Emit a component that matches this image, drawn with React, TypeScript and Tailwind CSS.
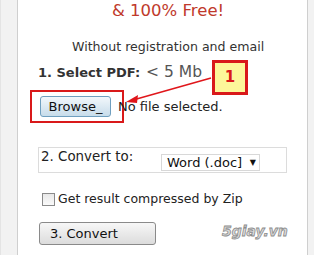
import React from "react";

const font = { fontFamily: '"DejaVu Sans", Verdana, sans-serif' };

export default function App() {
  return (
    <div className="flex h-[255px] w-[314px] overflow-hidden bg-white" style={font}>
      <div className="w-[18px] shrink-0 border-l border-r border-l-[#e4e4e4] border-r-[#cfcfcf] bg-[#f2f2f2]" />
      <div className="relative flex-1">
        <p className="h-[22px] pl-[94px] text-[16.5px] leading-[22px] text-[#c0392b]">&amp; 100% Free!</p>
        <p className="mt-[17px] h-[16px] pl-[54px] text-[12.6px] leading-[16px] text-[#333]">
          Without registration and email
        </p>
        <div className="mt-[8px] flex h-[18px] items-baseline pl-[20px] leading-[18px]">
          <span className="text-[13px] font-bold text-[#333]">1. Select PDF:</span>
          <span className="ml-[6px] text-[15.5px] text-[#555]">&lt; 5 Mb</span>
        </div>
        <div className="mt-[9px] flex items-center pl-[12px]">
          <div className="flex h-[33px] w-[94px] items-center border-2 border-[#d9191a] pl-[8px]">
            <button className="h-[21px] w-[71px] rounded-[3px] border border-[#6f9fbf] bg-gradient-to-b from-[#f2f7fb] to-[#c7dcea] text-[13px] leading-[19px] text-[#111]">
              Browse_
            </button>
          </div>
          <span className="-ml-[6px] text-[13px] leading-[16px] text-[#222]">No file selected.</span>
        </div>
        <div className="mx-[20px] mt-[24px] flex h-[26px] w-[249px] items-start border border-[#dcdcdc] pl-[2px] pt-[1px]">
          <span className="w-[120px] shrink-0 text-[13.4px] leading-[16px] text-[#222]">2. Convert to:</span>
          <div className="mt-[5px] flex h-[17px] w-[99px] items-center justify-between border border-[#d8d8d8] pl-[5px] pr-[3px]">
            <span className="text-[13px] leading-[15px] text-[#111]">Word (.doc]</span>
            <span className="text-[8px] leading-[8px] text-[#111]">▼</span>
          </div>
        </div>
        <div className="mt-[18px] flex h-[16px] items-center pl-[24px]">
          <span className="h-[13px] w-[13px] border border-[#8a8a8a] bg-gradient-to-b from-[#e8e8e8] to-[#fafafa]" />
          <span className="ml-[3px] text-[12.5px] leading-[16px] text-[#222]">Get result compressed by Zip</span>
        </div>
        <div className="mt-[15px] flex items-start pl-[21px]">
          <button className="h-[23px] w-[117px] rounded-[3px] border border-[#8a8a8a] bg-gradient-to-b from-[#f7f7f7] to-[#dcdcdc] pl-[10px] text-left text-[13px] leading-[20px] text-[#111]">
            3. Convert
          </button>
        </div>
        <span
          className="absolute left-[204px] top-[223px] text-[14px] font-bold italic leading-[16px] text-[#dadada]"
          style={{ WebkitTextStroke: "0.8px #8c8c8c", fontFamily: '"DejaVu Sans", sans-serif' }}
        >
          5giay.vn
        </span>
        <svg className="absolute left-0 top-0" width="290" height="130" viewBox="0 0 290 130">
          <line x1="193" y1="78" x2="115" y2="100" stroke="#e0161b" strokeWidth="1.6" />
          <polygon points="108,102 120,95 119,103" fill="#e0161b" />
        </svg>
        <div className="absolute left-[194px] top-[60px] flex h-[35px] w-[36px] items-center justify-center border-[3px] border-[#d9191a] bg-[#fdf79a] text-[15px] font-bold text-[#d9191a]">
          1
        </div>
      </div>
      <div className="w-[11px] shrink-0 border-l border-[#cfcfcf] bg-[#f2f2f2]" />
    </div>
  );
}
